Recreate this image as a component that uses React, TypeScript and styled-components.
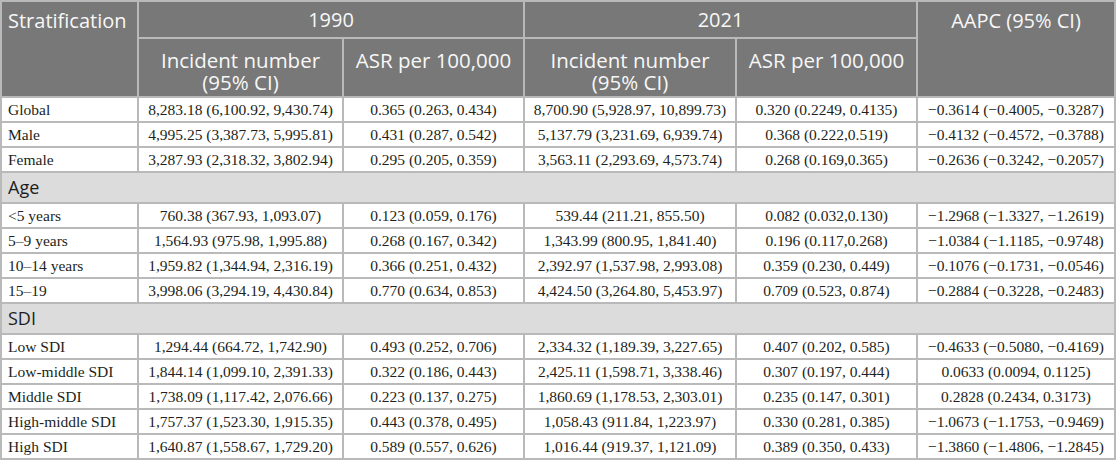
import styled, { createGlobalStyle } from 'styled-components';

type Row = { label: string; cells: string[] };
type Section = { title?: string; rows: Row[] };

const sections: Section[] = [
  {
    rows: [
      { label: 'Global', cells: ['8,283.18 (6,100.92, 9,430.74)', '0.365 (0.263, 0.434)', '8,700.90 (5,928.97, 10,899.73)', '0.320 (0.2249, 0.4135)', '−0.3614 (−0.4005, −0.3287)'] },
      { label: 'Male', cells: ['4,995.25 (3,387.73, 5,995.81)', '0.431 (0.287, 0.542)', '5,137.79 (3,231.69, 6,939.74)', '0.368 (0.222,0.519)', '−0.4132 (−0.4572, −0.3788)'] },
      { label: 'Female', cells: ['3,287.93 (2,318.32, 3,802.94)', '0.295 (0.205, 0.359)', '3,563.11 (2,293.69, 4,573.74)', '0.268 (0.169,0.365)', '−0.2636 (−0.3242, −0.2057)'] },
    ],
  },
  {
    title: 'Age',
    rows: [
      { label: '<5 years', cells: ['760.38 (367.93, 1,093.07)', '0.123 (0.059, 0.176)', '539.44 (211.21, 855.50)', '0.082 (0.032,0.130)', '−1.2968 (−1.3327, −1.2619)'] },
      { label: '5–9 years', cells: ['1,564.93 (975.98, 1,995.88)', '0.268 (0.167, 0.342)', '1,343.99 (800.95, 1,841.40)', '0.196 (0.117,0.268)', '−1.0384 (−1.1185, −0.9748)'] },
      { label: '10–14 years', cells: ['1,959.82 (1,344.94, 2,316.19)', '0.366 (0.251, 0.432)', '2,392.97 (1,537.98, 2,993.08)', '0.359 (0.230, 0.449)', '−0.1076 (−0.1731, −0.0546)'] },
      { label: '15–19', cells: ['3,998.06 (3,294.19, 4,430.84)', '0.770 (0.634, 0.853)', '4,424.50 (3,264.80, 5,453.97)', '0.709 (0.523, 0.874)', '−0.2884 (−0.3228, −0.2483)'] },
    ],
  },
  {
    title: 'SDI',
    rows: [
      { label: 'Low SDI', cells: ['1,294.44 (664.72, 1,742.90)', '0.493 (0.252, 0.706)', '2,334.32 (1,189.39, 3,227.65)', '0.407 (0.202, 0.585)', '−0.4633 (−0.5080, −0.4169)'] },
      { label: 'Low-middle SDI', cells: ['1,844.14 (1,099.10, 2,391.33)', '0.322 (0.186, 0.443)', '2,425.11 (1,598.71, 3,338.46)', '0.307 (0.197, 0.444)', '0.0633 (0.0094, 0.1125)'] },
      { label: 'Middle SDI', cells: ['1,738.09 (1,117.42, 2,076.66)', '0.223 (0.137, 0.275)', '1,860.69 (1,178.53, 2,303.01)', '0.235 (0.147, 0.301)', '0.2828 (0.2434, 0.3173)'] },
      { label: 'High-middle SDI', cells: ['1,757.37 (1,523.30, 1,915.35)', '0.443 (0.378, 0.495)', '1,058.43 (911.84, 1,223.97)', '0.330 (0.281, 0.385)', '−1.0673 (−1.1753, −0.9469)'] },
      { label: 'High SDI', cells: ['1,640.87 (1,558.67, 1,729.20)', '0.589 (0.557, 0.626)', '1,016.44 (919.37, 1,121.09)', '0.389 (0.350, 0.433)', '−1.3860 (−1.4806, −1.2845)'] },
    ],
  },
];

const colWidths = [135, 203, 179, 210, 179, 196];

const App = () => {
  return (
    <>
      <GlobalStyle />
      <Table>
        <colgroup>
          {colWidths.map((w, i) => (
            <col key={i} style={{ width: w }} />
          ))}
        </colgroup>
        <thead>
          <HeadRow $h={35}>
            <HeadCell rowSpan={2} $align="left">Stratification</HeadCell>
            <HeadCell colSpan={2} $middle>1990</HeadCell>
            <HeadCell colSpan={2} $middle>2021</HeadCell>
            <HeadCell rowSpan={2}>AAPC (95% CI)</HeadCell>
          </HeadRow>
          <HeadRow $h={57}>
            <SubHeadCell>Incident number<br />(95% CI)</SubHeadCell>
            <SubHeadCell>ASR per 100,000</SubHeadCell>
            <SubHeadCell>Incident number<br />(95% CI)</SubHeadCell>
            <SubHeadCell>ASR per 100,000</SubHeadCell>
          </HeadRow>
        </thead>
        <tbody>
          {sections.map((section, si) => (
            <SectionRows key={si} section={section} />
          ))}
        </tbody>
      </Table>
    </>
  );
};

const SectionRows = ({ section }: { section: Section }) => (
  <>
    {section.title && (
      <SectionRow>
        <SectionCell colSpan={6}>{section.title}</SectionCell>
      </SectionRow>
    )}
    {section.rows.map((row) => (
      <DataRow key={row.label}>
        <LabelCell>{row.label}</LabelCell>
        {row.cells.map((c, i) => (
          <ValueCell key={i}>{c}</ValueCell>
        ))}
      </DataRow>
    ))}
  </>
);

const GlobalStyle = createGlobalStyle`
  html, body {
    margin: 0;
    padding: 0;
    background: #ffffff;
  }
`;

const Table = styled.table`
  width: 1116px;
  table-layout: fixed;
  border-collapse: separate;
  border-spacing: 2px;
  background: #b9b9b9;
  margin: 0;
`;

const HeadRow = styled.tr<{ $h: number }>`
  height: ${(p) => p.$h}px;
`;

const HeadCell = styled.th<{ $align?: string; $middle?: boolean }>`
  background: #787878;
  color: #f7f7f7;
  font-family: "Open Sans", "Noto Sans", sans-serif;
  font-weight: 400;
  font-size: 20px;
  line-height: 24px;
  text-align: ${(p) => p.$align || 'center'};
  vertical-align: ${(p) => (p.$middle ? 'middle' : 'top')};
  padding: ${(p) => (p.$middle ? '0' : '7px')} 0 0 ${(p) => (p.$align === 'left' ? '6px' : '0')};
  white-space: nowrap;
`;

const SubHeadCell = styled.th`
  background: #787878;
  color: #f7f7f7;
  font-family: "Open Sans", "Noto Sans", sans-serif;
  font-weight: 400;
  font-size: 20.5px;
  line-height: 22px;
  text-align: center;
  vertical-align: top;
  padding: 10px 0 0;
  white-space: nowrap;
`;

const SectionRow = styled.tr`
  height: 29px;
`;

const SectionCell = styled.td`
  background: #dcdcdc;
  color: #1e1e1e;
  font-family: "Open Sans", "Noto Sans", sans-serif;
  font-size: 18px;
  line-height: 29px;
  padding: 0 0 0 6px;
`;

const DataRow = styled.tr`
  height: 23px;
`;

const LabelCell = styled.td`
  background: #ffffff;
  color: #231f20;
  font-family: "Liberation Serif", "Times New Roman", serif;
  font-size: 15.5px;
  line-height: 23px;
  padding: 0 0 0 6px;
  white-space: nowrap;
`;

const ValueCell = styled.td`
  background: #ffffff;
  color: #231f20;
  font-family: "Liberation Serif", "Times New Roman", serif;
  font-size: 15.5px;
  line-height: 23px;
  padding: 0;
  text-align: center;
  white-space: nowrap;
`;

export default App;
